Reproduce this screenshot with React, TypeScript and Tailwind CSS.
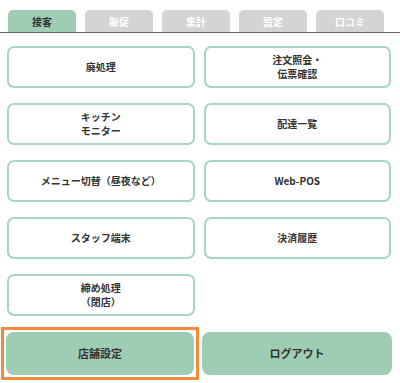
import React from 'react';

const tabs = ['接客', '販促', '集計', '設定', '口コミ'];

const menu: string[][] = [
  ['廃処理'],
  ['注文照会・', '伝票確認'],
  ['キッチン', 'モニター'],
  ['配達一覧'],
  ['メニュー切替（昼夜など）'],
  ['Web-POS'],
  ['スタッフ端末'],
  ['決済履歴'],
  ['締め処理', '（閉店）'],
];

const App: React.FC = () => {
  return (
    <div className="w-[400px] h-[383px] bg-white font-['Noto_Sans_CJK_JP',sans-serif] text-[#333]">
      <div className="flex gap-[9px] pl-[8px] pt-[10px]">
        {tabs.map((t, i) => (
          <div
            key={t}
            className={`w-[68px] h-[22px] rounded-t-[5px] flex items-center justify-center text-[10px] font-bold ${
              i === 0 ? 'bg-[#9ecdb4] text-[#333]' : 'bg-[#d4d4d4] text-white'
            }`}
          >
            {t}
          </div>
        ))}
      </div>
      <div className="h-px bg-[#666]" />

      <div className="grid grid-cols-2 gap-x-[9px] gap-y-[15px] pl-[7px] pr-[9px] pt-[13px]">
        {menu.map((lines) => (
          <button
            key={lines.join('')}
            className="h-[42px] rounded-[7px] border-2 border-[#a6d6bd] bg-white flex flex-col items-center justify-center text-[10px] font-bold leading-[14px]"
          >
            {lines.map((l) => (
              <span key={l}>{l}</span>
            ))}
          </button>
        ))}
      </div>

      <div className="flex gap-[3px] pl-[1px] pt-[11px]">
        <div className="w-[198px] border-[3px] border-[#f58a3a] p-[2px]">
          <button className="w-full h-[43px] rounded-[8px] bg-[#9ecdb4] text-[11px] font-bold">
            店舗設定
          </button>
        </div>
        <div className="pt-[5px]">
          <button className="w-[190px] h-[43px] rounded-[8px] bg-[#9ecdb4] text-[11px] font-bold">
            ログアウト
          </button>
        </div>
      </div>
    </div>
  );
};

export default App;
